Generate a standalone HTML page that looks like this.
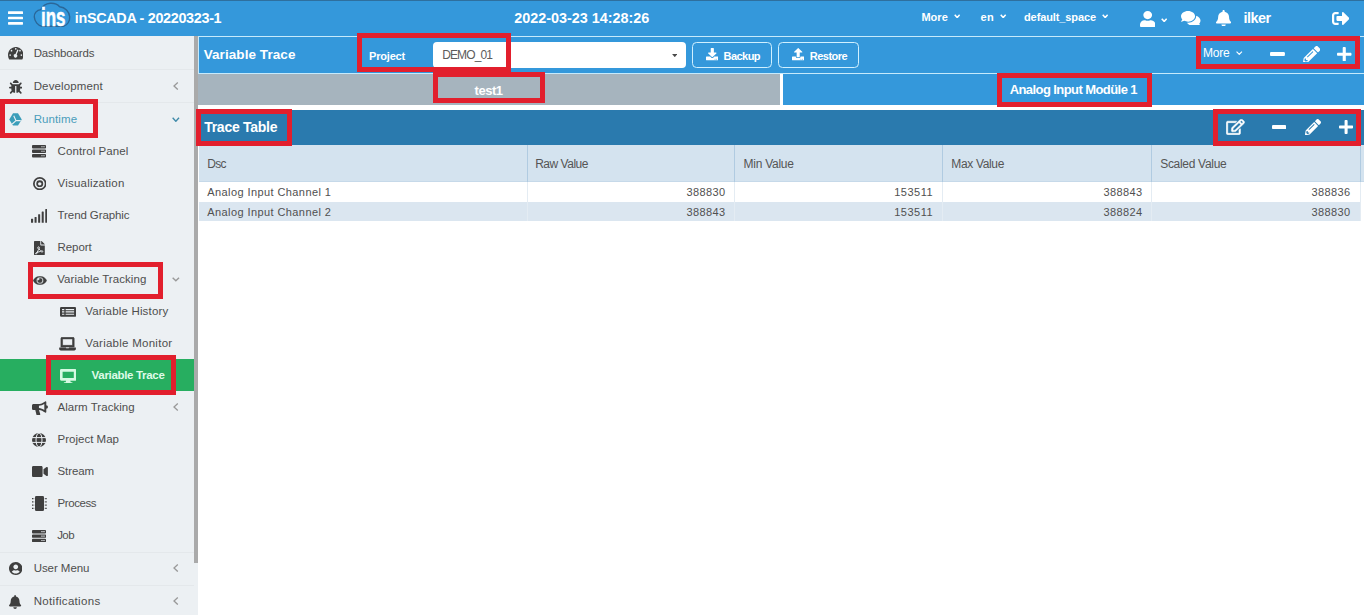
<!DOCTYPE html>
<html lang="en">
<head>
<meta charset="utf-8">
<title>inSCADA - Variable Trace</title>
<style>
*{box-sizing:border-box;margin:0;padding:0}
html,body{width:1364px;height:615px;overflow:hidden;background:#fff;font-family:"Liberation Sans",sans-serif;color:#444}
div,span,svg{position:absolute}
.t{white-space:nowrap;line-height:1}
#topbar{left:0;top:0;width:1364px;height:36px;background:#3498db;border-top:1px solid #2e6f9e}
#sidebar{left:0;top:36px;width:198px;height:579px;background:#ecf0f3}
#sbscroll{left:194px;top:36px;width:4px;height:527px;background:#aaa}
.sep{left:0;width:194px;height:1px;background:#e4e8eb}
#active{left:0;top:359px;width:194px;height:32px;background:#27ae60}
.red{border:4.5px solid #e21f2d}
#hdr{left:198px;top:36px;width:1166px;height:38px;background:#3498db;border:1px solid #c6eafc;border-right:0}
#tab1{left:198px;top:74px;width:582px;height:31px;background:#a6b4be}
#tab2{left:783px;top:74px;width:581px;height:31px;background:#3498db}
#tbar{left:199px;top:110px;width:1165px;height:35px;background:#2a7aae}
#thead{left:199px;top:145px;width:1165px;height:36.5px;background:#d4e3ef;border-bottom:1px solid #c6d9e9}
#row2{left:199px;top:201.5px;width:1160.5px;height:19.5px;background:#dbe6f0}
.vl{width:1px;background:#b0cbe1}
.btn{border:1px solid #d0f0ff;border-radius:4.5px;height:26px;top:42px}
#sel{left:433px;top:42px;width:253px;height:26px;background:#fff;border-radius:4px}
</style>
</head>
<body>

<div id="topbar"></div>
<svg style="left:8px;top:11px;color:#fff" width="15.00" height="14.00" viewBox="0 0 15 14" preserveAspectRatio="none" fill="currentColor"><rect x="0" y="0.3" width="15" height="2.7" rx="0.6"/><rect x="0" y="5.65" width="15" height="2.7" rx="0.6"/><rect x="0" y="11" width="15" height="2.7" rx="0.6"/></svg>
<svg style="left:0;top:0" width="80" height="36" viewBox="0 0 80 36"><path d="M41 9.600C36.500 10 34 13.500 34.300 17C34.600 21.500 38 25.600 42 26.300H63.500C67.500 25.300 70 21 69.700 16.800C69.300 11.300 65 7.300 59.600 6.700C57.300 4 53.500 3 50.200 3.300C46 3.700 42.600 6 41 9.600Z" fill="none" stroke="#2a6799" stroke-width="1.4"/></svg>
<span class="t" id="logo" style="left:40.600px;top:3px;font-size:25px;line-height:28px;font-weight:bold;color:#fff;transform-origin:0 0;transform:scaleX(0.680);-webkit-text-stroke:0.5px #fff">ins</span>
<span class="t" id="t_title" style="left:74.80px;top:10px;font-size:14.4px;line-height:16px;color:#fff;letter-spacing:-0.327px;font-weight:bold;">inSCADA - 20220323-1</span>
<span class="t" id="t_date" style="left:514.20px;top:10px;font-size:14.4px;line-height:16px;color:#fff;letter-spacing:-0.011px;font-weight:bold;">2022-03-23 14:28:26</span>
<span class="t" id="t_more" style="left:921.40px;top:11px;font-size:11px;line-height:12px;color:#fff;letter-spacing:0.030px;font-weight:bold;">More</span>
<svg style="left:954px;top:13.8px;color:#fff" width="6.40" height="4.50" viewBox="0 0 7 4.6" preserveAspectRatio="none" fill="currentColor"><path d="M0.8 0.8L3.5 3.6L6.2 0.8" fill="none" stroke="currentColor" stroke-width="1.7"/></svg>
<span class="t" style="left:980.60px;top:11px;font-size:11px;line-height:12px;color:#fff;letter-spacing:0.282px;font-weight:bold;">en</span>
<svg style="left:1000.3px;top:13.8px;color:#fff" width="6.40" height="4.50" viewBox="0 0 7 4.6" preserveAspectRatio="none" fill="currentColor"><path d="M0.8 0.8L3.5 3.6L6.2 0.8" fill="none" stroke="currentColor" stroke-width="1.7"/></svg>
<span class="t" style="left:1024.00px;top:11px;font-size:11px;line-height:12px;color:#fff;letter-spacing:-0.105px;font-weight:bold;">default_space</span>
<svg style="left:1102px;top:13.8px;color:#fff" width="6.40" height="4.50" viewBox="0 0 7 4.6" preserveAspectRatio="none" fill="currentColor"><path d="M0.8 0.8L3.5 3.6L6.2 0.8" fill="none" stroke="currentColor" stroke-width="1.7"/></svg>
<svg style="left:1139.8px;top:10.6px;color:#fff" width="15.40" height="16.40" viewBox="0.00 0.00 448.00 512.00" preserveAspectRatio="none" fill="currentColor"><path d="M224 256c70.7 0 128-57.3 128-128S294.7 0 224 0 96 57.3 96 128s57.3 128 128 128zm89.6 32h-16.7c-22.2 10.2-46.9 16-72.9 16s-50.6-5.800-72.900-16h-16.700C60.200 288 0 348.200 0 422.400V464c0 26.500 21.500 48 48 48h352c26.500 0 48-21.500 48-48v-41.600c0-74.200-60.200-134.400-134.400-134.400z"/></svg>
<svg style="left:1161px;top:17.8px;color:#fff" width="6.40" height="4.40" viewBox="0 0 7 4.6" preserveAspectRatio="none" fill="currentColor"><path d="M0.8 0.8L3.5 3.6L6.2 0.8" fill="none" stroke="currentColor" stroke-width="1.7"/></svg>
<svg style="left:1181px;top:10.6px;color:#fff" width="19.50" height="14.90" viewBox="0.00 32.00 576.00 448.00" preserveAspectRatio="none" fill="currentColor"><path d="M416 192c0-88.400-93.100-160-208-160S0 103.600 0 192c0 34.300 14.100 65.900 38 92-13.400 30.200-35.500 54.200-35.800 54.500-2.200 2.300-2.800 5.700-1.500 8.700S4.800 352 8 352c36.600 0 66.900-12.300 88.700-25 32.200 15.700 70.300 25 111.300 25 114.900 0 208-71.600 208-160zm122 220c23.900-26 38-57.700 38-92 0-66.900-53.500-124.200-129.300-148.100.9 6.600 1.300 13.300 1.300 20.100 0 105.900-107.700 192-240 192-10.800 0-21.300-.8-31.700-1.900C207.800 439.600 281.800 480 368 480c41 0 79.100-9.200 111.300-25 21.800 12.700 52.100 25 88.700 25 3.200 0 6.100-1.900 7.300-4.800 1.300-2.900.7-6.300-1.500-8.700-.3-.3-22.400-24.200-35.800-54.500z"/></svg>
<svg style="left:1216px;top:9.7px;color:#fff" width="15.20" height="16.60" viewBox="-0.00 0.00 448.00 512.00" preserveAspectRatio="none" fill="currentColor"><path d="M224 512c35.320 0 63.970-28.650 63.970-64H160.030c0 35.350 28.650 64 63.970 64zm215.390-149.710c-19.320-20.760-55.470-51.990-55.470-154.290 0-77.700-54.480-139.900-127.940-155.160V32c0-17.670-14.320-32-31.980-32s-31.980 14.330-31.980 32v20.840C118.560 68.100 64.080 130.300 64.080 208c0 102.300-36.150 133.530-55.470 154.290-6 6.450-8.660 14.160-8.610 21.710.11 16.400 12.980 32 32.100 32h383.800c19.120 0 32-15.600 32.100-32 .05-7.550-2.610-15.270-8.610-21.710z"/></svg>
<span class="t" style="left:1243.50px;top:10px;font-size:14.4px;line-height:16px;color:#fff;letter-spacing:-0.485px;font-weight:bold;">ilker</span>
<svg style="left:1331.5px;top:12px;color:#fff" width="17.50" height="13.00" viewBox="0.00 63.98 503.97 384.06" preserveAspectRatio="none" fill="currentColor"><path d="M497 273L329 441c-15 15-41 4.500-41-17v-96H152c-13.300 0-24-10.700-24-24v-96c0-13.300 10.700-24 24-24h136V88c0-21.400 25.900-32 41-17l168 168c9.300 9.400 9.300 24.600 0 34zM192 436v-40c0-6.600-5.400-12-12-12H96c-17.700 0-32-14.300-32-32V160c0-17.700 14.300-32 32-32h84c6.600 0 12-5.400 12-12V76c0-6.600-5.400-12-12-12H96c-53 0-96 43-96 96v192c0 53 43 96 96 96h84c6.600 0 12-5.400 12-12z"/></svg>
<div id="sidebar"></div><div id="sbscroll"></div>
<div class="sep" style="top:69px"></div>
<div class="sep" style="top:102px"></div>
<div class="sep" style="top:551.5px"></div>
<div class="sep" style="top:584.5px"></div>
<div id="active"></div>
<span class="t" style="left:33.70px;top:47px;font-size:11.5px;line-height:12px;color:#4e4e4e;letter-spacing:-0.141px;">Dashboards</span>
<span class="t" style="left:33.70px;top:80px;font-size:11.5px;line-height:12px;color:#4e4e4e;letter-spacing:0.122px;">Development</span>
<span class="t" style="left:33.70px;top:113px;font-size:11.5px;line-height:12px;color:#4a9dbb;letter-spacing:0.097px;">Runtime</span>
<span class="t" style="left:57.60px;top:145px;font-size:11.5px;line-height:12px;color:#4e4e4e;letter-spacing:0.086px;">Control Panel</span>
<span class="t" style="left:57.60px;top:177px;font-size:11.5px;line-height:12px;color:#4e4e4e;letter-spacing:0.196px;">Visualization</span>
<span class="t" style="left:57.60px;top:209px;font-size:11.5px;line-height:12px;color:#4e4e4e;letter-spacing:-0.091px;">Trend Graphic</span>
<span class="t" style="left:57.60px;top:241px;font-size:11.5px;line-height:12px;color:#4e4e4e;letter-spacing:-0.086px;">Report</span>
<span class="t" style="left:57.20px;top:273px;font-size:11.5px;line-height:12px;color:#4e4e4e;letter-spacing:0.071px;">Variable Tracking</span>
<span class="t" style="left:85.30px;top:305px;font-size:11.5px;line-height:12px;color:#4e4e4e;letter-spacing:0.174px;">Variable History</span>
<span class="t" style="left:85.30px;top:337px;font-size:11.5px;line-height:12px;color:#4e4e4e;letter-spacing:0.264px;">Variable Monitor</span>
<span class="t" style="left:91.60px;top:369px;font-size:11.5px;line-height:12px;color:#defbe7;letter-spacing:-0.319px;font-weight:bold;">Variable Trace</span>
<span class="t" style="left:57.50px;top:401px;font-size:11.5px;line-height:12px;color:#4e4e4e;letter-spacing:0.037px;">Alarm Tracking</span>
<span class="t" style="left:57.50px;top:433px;font-size:11.5px;line-height:12px;color:#4e4e4e;letter-spacing:0.013px;">Project Map</span>
<span class="t" style="left:57.50px;top:465px;font-size:11.5px;line-height:12px;color:#4e4e4e;letter-spacing:-0.094px;">Stream</span>
<span class="t" style="left:57.50px;top:497px;font-size:11.5px;line-height:12px;color:#4e4e4e;letter-spacing:-0.406px;">Process</span>
<span class="t" style="left:57.20px;top:529px;font-size:11.5px;line-height:12px;color:#4e4e4e;letter-spacing:-0.581px;">Job</span>
<span class="t" style="left:33.70px;top:562px;font-size:11.5px;line-height:12px;color:#4e4e4e;letter-spacing:-0.060px;">User Menu</span>
<span class="t" style="left:33.70px;top:595px;font-size:11.5px;line-height:12px;color:#4e4e4e;letter-spacing:0.320px;">Notifications</span>
<svg style="left:7.8px;top:47.4px;color:#3f3f3f" width="15.50" height="12.60" viewBox="0 0 576 448" preserveAspectRatio="none" fill="currentColor"><path d="M288 0C128.940 0 0 128.940 0 288c0 52.800 14.250 102.260 39.060 144.800 5.610 9.620 16.300 15.200 27.440 15.200h443c11.140 0 21.830-5.580 27.440-15.200C561.750 390.260 576 340.800 576 288 576 128.940 447.060 0 288 0z"/><g fill="#ecf0f3"><circle cx="288" cy="64" r="30"/><circle cx="130" cy="130" r="30"/><circle cx="446" cy="130" r="30"/><circle cx="80" cy="288" r="30"/><circle cx="496" cy="288" r="30"/><path d="M392 110l-70 160a64 64 0 1 1-44-18l70-160z"/></g></svg>
<svg style="left:8.5px;top:80px;color:#3f3f3f" width="13.50" height="13.70" viewBox="0.00 0.00 512.00 512.00" preserveAspectRatio="none" fill="currentColor"><path d="M511.988 288.900c-.478 17.430-15.217 31.100-32.653 31.100H424v16c0 21.864-4.882 42.584-13.600 61.145l60.228 60.228c12.496 12.497 12.496 32.758 0 45.255-12.498 12.497-32.759 12.496-45.256 0l-54.736-54.736C345.886 467.965 314.351 480 280 480V236c0-6.627-5.373-12-12-12h-24c-6.627 0-12 5.373-12 12v244c-34.351 0-65.886-12.035-90.636-32.108l-54.736 54.736c-12.498 12.497-32.759 12.496-45.256 0-12.496-12.497-12.496-32.758 0-45.255l60.228-60.228C92.882 378.584 88 357.864 88 336v-16H32.666C15.230 320 .491 306.330.013 288.900-.484 270.816 14.028 256 32 256h56v-58.745l-46.628-46.628c-12.496-12.497-12.496-32.758 0-45.255 12.498-12.497 32.758-12.497 45.256 0L141.255 160h229.489l54.627-54.627c12.498-12.497 32.758-12.497 45.256 0 12.496 12.497 12.496 32.758 0 45.255L424 197.255V256h56c17.972 0 32.484 14.816 31.988 32.900zM257 0c-61.856 0-112 50.144-112 112h224C369 50.144 318.856 0 257 0z"/></svg>
<svg style="left:9px;top:113px;color:#3a9db9" width="13.00" height="12.80" viewBox="0 0 26 25" preserveAspectRatio="none" fill="currentColor"><path d="M8 0.500h10l7.500 12-7.500 12H8L0.500 12.500z"/><path d="M9.500 5.500l4.500 9.500M14 15h9.500M14 15l-7.500 6.500" fill="none" stroke="#ecf0f3" stroke-width="2.200"/></svg>
<svg style="left:32.3px;top:145.4px;color:#3f3f3f" width="14.10" height="12.50" viewBox="0 0 14 12.2" preserveAspectRatio="none" fill="currentColor"><path fill-rule="evenodd" d="M0.9 0h12.2a.9.9 0 0 1 .9.9v1.6a.9.9 0 0 1-.9.9H.9a.9.9 0 0 1-.9-.9V.9A.9.9 0 0 1 .9 0zM0.9 4.4h12.2a.9.9 0 0 1 .9.9v1.6a.9.9 0 0 1-.9.9H.9a.9.9 0 0 1-.9-.9V5.300a.9.9 0 0 1 .9-.9zM0.9 8.800h12.200a.9.9 0 0 1 .9.9v1.600a.9.9 0 0 1-.9.900H.9a.9.9 0 0 1-.9-.9V9.700a.9.9 0 0 1 .9-.9zM9.300 1.100v1.200h1.200V1.100zM11.300 1.100v1.200h1.200V1.100zM9.300 5.500v1.200h1.200V5.500zM11.300 5.500v1.200h1.200V5.500zM9.300 9.900v1.200h1.200V9.900zM11.300 9.900v1.200h1.200V9.900z"/></svg>
<svg style="left:32.7px;top:177.2px;color:#3f3f3f" width="13.50" height="13.30" viewBox="0 0 496 496" preserveAspectRatio="none" fill="currentColor"><path fill-rule="evenodd" d="M248 0a248 248 0 1 0 0 496a248 248 0 1 0 0-496zM248 64a184 184 0 1 1 0 368a184 184 0 1 1 0-368zM248 120a128 128 0 1 0 0 256a128 128 0 1 0 0-256zM248 192a64 64 0 1 1 0 128a64 64 0 1 1 0-128z"/></svg>
<svg style="left:31.2px;top:208.8px;color:#3f3f3f" width="16.30" height="13.80" viewBox="0 0 16 14" preserveAspectRatio="none" fill="currentColor"><rect x="0" y="9.800" width="2.100" height="4.200" rx=".4"/><rect x="3.500" y="8" width="2" height="6" rx=".4"/><rect x="7" y="5.300" width="2" height="8.700" rx=".4"/><rect x="10.500" y="2.600" width="2" height="11.400" rx=".4"/><rect x="14" y="0" width="2" height="14" rx=".4"/></svg>
<svg style="left:33.9px;top:240.5px;color:#3f3f3f" width="10.80" height="14.10" viewBox="0 0 384 512" preserveAspectRatio="none" fill="currentColor"><path d="M224 136V0H24C10.700 0 0 10.700 0 24v464c0 13.300 10.700 24 24 24h336c13.300 0 24-10.700 24-24V160H248c-13.200 0-24-10.800-24-24zM384 121.900v6.100H256V0h6.100c6.400 0 12.500 2.500 17 7l97.900 98c4.500 4.500 7 10.600 7 16.900z"/><path d="M150 215c-14 0-20 16-12 42c5 18 12 36 22 54c-12 32-30 68-52 100c-22 10-48 24-52 44c-3 16 18 28 38 6c14-14 28-34 42-58c30-12 64-20 96-24c22 14 48 22 66 20c22-3 26-30 2-38c-16-5-38-5-62-2c-24-18-44-44-56-72c8-28 12-52 6-62c-8-14-22-14-38-10z" fill="none" stroke="#ecf0f3" stroke-width="34" stroke-linejoin="round"/></svg>
<svg style="left:33.2px;top:275.5px;color:#3f3f3f" width="13.90" height="9.00" viewBox="-6 58 588 396" preserveAspectRatio="none" fill="currentColor"><path stroke="currentColor" stroke-width="12" stroke-linejoin="round" d="M572.520 241.400C518.290 135.590 410.930 64 288 64S57.680 135.640 3.480 241.410a32.350 32.350 0 0 0 0 29.190C57.710 376.410 165.070 448 288 448s230.320-71.640 284.520-177.410a32.350 32.350 0 0 0 0-29.190zM288 400a144 144 0 1 1 144-144 143.930 143.930 0 0 1-144 144zm0-240a95.310 95.310 0 0 0-25.310 3.790 47.850 47.850 0 0 1-66.900 66.900A95.780 95.780 0 1 0 288 160z"/></svg>
<svg style="left:59.5px;top:307px;color:#3f3f3f" width="16.10" height="9.80" viewBox="0 0 16 10" preserveAspectRatio="none" fill="currentColor"><path fill-rule="evenodd" d="M1.200 0h13.600a1.200 1.200 0 0 1 1.200 1.200v7.600a1.200 1.200 0 0 1-1.200 1.200H1.200A1.200 1.200 0 0 1 0 8.800V1.200A1.200 1.200 0 0 1 1.200 0zM2 2.100v1.100h2.300V2.100zM5.600 2.100v1.100h8.400V2.100zM2 4.450v1.100h2.300v-1.100zM5.600 4.450v1.100h8.400v-1.100zM2 6.800v1.100h2.300V6.800zM5.600 6.800v1.100h8.400V6.800z"/></svg>
<svg style="left:58.8px;top:337px;color:#3f3f3f" width="17.10" height="13.50" viewBox="-10 -10 660 532" preserveAspectRatio="none" fill="currentColor"><path stroke="currentColor" stroke-width="22" stroke-linejoin="round" d="M624 416H381.540c-.74 19.810-14.710 32-32.740 32H288c-18.690 0-33.020-17.470-32.770-32H16c-8.800 0-16 7.200-16 16v16c0 35.200 28.800 64 64 64h512c35.200 0 64-28.800 64-64v-16c0-8.800-7.200-16-16-16zM576 48c0-26.400-21.600-48-48-48H112C85.600 0 64 21.600 64 48v336h512V48zm-64 272H128V64h384v256z"/></svg>
<svg style="left:59.5px;top:368.6px;color:#d6f9e2" width="16.40" height="14.60" viewBox="0 0 16.4 14.4" preserveAspectRatio="none" fill="currentColor"><path fill-rule="evenodd" d="M1.300 0h13.800a1.300 1.300 0 0 1 1.300 1.300v8.900a1.300 1.300 0 0 1-1.300 1.300H10.300l.5 1.500h1.100a.7.700 0 0 1 0 1.400H4.500a.7.700 0 0 1 0-1.400h1.100l.5-1.500H1.300A1.300 1.300 0 0 1 0 10.200V1.300A1.300 1.300 0 0 1 1.300 0zM2.600 2.600v6.200h11.200V2.600z"/></svg>
<svg style="left:31.7px;top:400.6px;color:#3f3f3f" width="15.90" height="14.40" viewBox="0 0 16 14.4" preserveAspectRatio="none" fill="currentColor"><path d="M13.200 0.400c.5-.4 1.200-.1 1.200.6v3.300a1.700 1.700 0 0 1 0 3.400v3.300c0 .7-.7 1-1.200.6C11.300 10 9.200 9.100 7 8.900v.1l1.300 4c.2.700-.3 1.400-1 1.400H5.500c-.5 0-.9-.3-1-.7L3.300 9H1.600C.7 9 0 8.300 0 7.400V4.600C0 3.700.7 3 1.600 3H6c2.600 0 5.100-1 7.200-2.600zM12.400 3C10.800 4 9 4.600 7 4.800v2.300c2 .2 3.800.9 5.400 1.900z" fill-rule="evenodd"/></svg>
<svg style="left:32px;top:432.7px;color:#3f3f3f" width="14.00" height="14.00" viewBox="0 0 14 14" preserveAspectRatio="none" fill="currentColor"><circle cx="7" cy="7" r="7"/><g fill="none" stroke="#ecf0f3" stroke-width="1"><ellipse cx="7" cy="7" rx="3" ry="7"/><path d="M0 4.600h14M0 9.400h14"/></g></svg>
<svg style="left:31.7px;top:466px;color:#3f3f3f" width="15.90" height="11.00" viewBox="0 0 576 384" preserveAspectRatio="none" fill="currentColor"><path d="M336.200 0H47.800C21.400 0 0 21.400 0 47.800v288.400C0 362.600 21.400 384 47.800 384h288.400c26.400 0 47.800-21.400 47.800-47.800V47.800C384 21.400 362.600 0 336.200 0zM525.600 37.700L416 113.300v157.400l109.600 75.500c21.200 14.600 50.400-.3 50.400-25.800V63.500c0-25.400-29.100-40.400-50.400-25.800z"/></svg>
<svg style="left:32px;top:496px;color:#3f3f3f" width="15.00" height="15.00" viewBox="0 0 15 15" preserveAspectRatio="none" fill="currentColor"><rect x="3" y="0" width="9" height="15" rx="1.300"/><path d="M0 2.600h2.200M0 5.900h2.200M0 9.100h2.200M0 12.400h2.200M12.800 2.600H15M12.800 5.900H15M12.800 9.100H15M12.800 12.400H15" fill="none" stroke="currentColor" stroke-width="1.100" stroke-dasharray="1 .5"/></svg>
<svg style="left:32.2px;top:529.6px;color:#3f3f3f" width="14.10" height="12.20" viewBox="0 0 14 12.2" preserveAspectRatio="none" fill="currentColor"><path fill-rule="evenodd" d="M0.9 0h12.2a.9.9 0 0 1 .9.9v1.6a.9.9 0 0 1-.9.9H.9a.9.9 0 0 1-.9-.9V.9A.9.9 0 0 1 .9 0zM0.9 4.4h12.2a.9.9 0 0 1 .9.9v1.6a.9.9 0 0 1-.9.9H.9a.9.9 0 0 1-.9-.9V5.300a.9.9 0 0 1 .9-.9zM0.9 8.800h12.200a.9.9 0 0 1 .9.9v1.600a.9.9 0 0 1-.9.900H.9a.9.9 0 0 1-.9-.9V9.700a.9.9 0 0 1 .9-.9zM9.300 1.100v1.200h1.200V1.100zM11.300 1.100v1.200h1.200V1.100zM9.300 5.500v1.200h1.200V5.500zM11.300 5.500v1.200h1.200V5.500zM9.300 9.900v1.200h1.200V9.900zM11.300 9.900v1.200h1.200V9.900z"/></svg>
<svg style="left:8.5px;top:562px;color:#3f3f3f" width="13.50" height="13.00" viewBox="0 0 496 496" preserveAspectRatio="none" fill="currentColor"><path d="M248 0C111 0 0 111 0 248s111 248 248 248 248-111 248-248S385 0 248 0zm0 96c48.600 0 88 39.400 88 88s-39.400 88-88 88-88-39.400-88-88 39.400-88 88-88zm0 344c-58.700 0-111.300-26.600-146.500-68.200 18.800-35.400 55.600-59.800 98.500-59.800 2.400 0 4.800.4 7.100 1.100 13 4.200 26.600 6.900 40.900 6.900 14.300 0 28-2.700 40.900-6.900 2.300-.7 4.700-1.100 7.100-1.100 42.900 0 79.700 24.400 98.500 59.800C359.300 413.400 306.700 440 248 440z"/></svg>
<svg style="left:9.4px;top:595px;color:#3f3f3f" width="12.20" height="14.00" viewBox="-0.00 0.00 448.00 512.00" preserveAspectRatio="none" fill="currentColor"><path d="M224 512c35.320 0 63.970-28.650 63.970-64H160.030c0 35.350 28.650 64 63.970 64zm215.390-149.710c-19.320-20.760-55.470-51.990-55.470-154.290 0-77.700-54.480-139.900-127.940-155.160V32c0-17.670-14.320-32-31.980-32s-31.980 14.330-31.980 32v20.840C118.560 68.100 64.080 130.300 64.080 208c0 102.300-36.150 133.530-55.470 154.290-6 6.450-8.660 14.160-8.610 21.710.11 16.400 12.980 32 32.100 32h383.800c19.120 0 32-15.600 32.100-32 .05-7.550-2.610-15.270-8.610-21.710z"/></svg>
<svg style="left:173.3px;top:82.3px;color:#999" width="5.50" height="8.20" viewBox="0 0 5.5 8.2" preserveAspectRatio="none" fill="currentColor"><path d="M4.8 0.6L1 4.1L4.8 7.6" fill="none" stroke="currentColor" stroke-width="1.3"/></svg>
<svg style="left:172px;top:116.8px;color:#3f8aa9" width="7.70" height="5.10" viewBox="0 0 7 4.2" preserveAspectRatio="none" fill="currentColor"><path d="M0.6 0.6L3.5 3.5L6.4 0.6" fill="none" stroke="currentColor" stroke-width="1.25"/></svg>
<svg style="left:171.9px;top:277.2px;color:#999" width="7.70" height="4.60" viewBox="0 0 7 4.2" preserveAspectRatio="none" fill="currentColor"><path d="M0.6 0.6L3.5 3.5L6.4 0.6" fill="none" stroke="currentColor" stroke-width="1.25"/></svg>
<svg style="left:173.3px;top:403px;color:#999" width="5.50" height="8.00" viewBox="0 0 5.5 8.2" preserveAspectRatio="none" fill="currentColor"><path d="M4.8 0.6L1 4.1L4.8 7.6" fill="none" stroke="currentColor" stroke-width="1.3"/></svg>
<svg style="left:173.3px;top:564.2px;color:#999" width="5.50" height="8.20" viewBox="0 0 5.5 8.2" preserveAspectRatio="none" fill="currentColor"><path d="M4.8 0.6L1 4.1L4.8 7.6" fill="none" stroke="currentColor" stroke-width="1.3"/></svg>
<svg style="left:173.3px;top:597.2px;color:#999" width="5.50" height="8.20" viewBox="0 0 5.5 8.2" preserveAspectRatio="none" fill="currentColor"><path d="M4.8 0.6L1 4.1L4.8 7.6" fill="none" stroke="currentColor" stroke-width="1.3"/></svg>
<div id="hdr"></div>
<span class="t" style="left:203.70px;top:47px;font-size:13.5px;line-height:15px;color:#fff;letter-spacing:0.070px;font-weight:bold;">Variable Trace</span>
<span class="t" style="left:369.00px;top:50px;font-size:11px;line-height:12px;color:#fff;letter-spacing:-0.185px;font-weight:bold;">Project</span>
<div id="sel"></div>
<span class="t" style="left:442.20px;top:48px;font-size:12px;line-height:14px;color:#5c5c5c;letter-spacing:-0.889px;">DEMO_01</span>
<svg style="left:671.7px;top:54px" width="5.6" height="3.2" viewBox="0 0 6 3.5"><path d="M0 0H6L3 3.5Z" fill="#4a4a4a"/></svg>
<div class="btn" style="left:692px;width:80px"></div>
<svg style="left:705.6px;top:48.4px;color:#fff" width="12.60" height="12.30" viewBox="0 0 512 512" preserveAspectRatio="none" fill="currentColor"><path d="M216 0h80c13.300 0 24 10.700 24 24v168h87.700c17.800 0 26.700 21.500 14.100 34.100L269.700 378.300c-7.500 7.500-19.800 7.500-27.300 0L90.100 226.100c-12.600-12.600-3.700-34.100 14.100-34.100H192V24c0-13.300 10.700-24 24-24zm296 376v112c0 13.300-10.700 24-24 24H24c-13.300 0-24-10.700-24-24V376c0-13.300 10.700-24 24-24h146.700l49 49c20.100 20.100 52.500 20.100 72.600 0l49-49H488c13.300 0 24 10.700 24 24zm-124 88c0-11-9-20-20-20s-20 9-20 20 9 20 20 20 20-9 20-20zm64 0c0-11-9-20-20-20s-20 9-20 20 9 20 20 20 20-9 20-20z"/></svg>
<span class="t" style="left:723.60px;top:50px;font-size:11px;line-height:12px;color:#fff;letter-spacing:-0.556px;font-weight:bold;">Backup</span>
<div class="btn" style="left:778px;width:81px"></div>
<svg style="left:792px;top:48.4px;color:#fff" width="12.40" height="12.30" viewBox="0 0 512 512" preserveAspectRatio="none" fill="currentColor"><path d="M296 384h-80c-13.300 0-24-10.700-24-24V192h-87.700c-17.800 0-26.700-21.500-14.100-34.100L242.300 5.700c7.500-7.500 19.800-7.500 27.300 0l152.200 152.200c12.600 12.600 3.700 34.100-14.100 34.100H320v168c0 13.300-10.700 24-24 24zm216-8v112c0 13.300-10.700 24-24 24H24c-13.300 0-24-10.700-24-24V376c0-13.300 10.700-24 24-24h136v8c0 30.900 25.100 56 56 56h80c30.900 0 56-25.100 56-56v-8h136c13.300 0 24 10.700 24 24zm-124 88c0-11-9-20-20-20s-20 9-20 20 9 20 20 20 20-9 20-20zm64 0c0-11-9-20-20-20s-20 9-20 20 9 20 20 20 20-9 20-20z"/></svg>
<span class="t" style="left:809.70px;top:50px;font-size:11px;line-height:12px;color:#fff;letter-spacing:-0.494px;font-weight:bold;">Restore</span>
<span class="t" style="left:1203.00px;top:46px;font-size:12px;line-height:14px;color:#fff;letter-spacing:-0.185px;">More</span>
<svg style="left:1236px;top:51px;color:#fff" width="6.50" height="4.00" viewBox="0 0 7 4.2" preserveAspectRatio="none" fill="currentColor"><path d="M0.6 0.6L3.5 3.5L6.4 0.6" fill="none" stroke="currentColor" stroke-width="1.25"/></svg>
<svg style="left:1270.3px;top:52px;color:#fff" width="14.90" height="4.00" viewBox="0.00 208.00 448.00 96.00" preserveAspectRatio="none" fill="currentColor"><path d="M416 208H32c-17.670 0-32 14.330-32 32v32c0 17.670 14.330 32 32 32h384c17.670 0 32-14.330 32-32v-32c0-17.670-14.330-32-32-32z"/></svg>
<svg style="left:1302.7px;top:45.5px;color:#fff" width="17.30" height="16.90" viewBox="0.02 0.08 511.98 511.98" preserveAspectRatio="none" fill="currentColor"><path d="M497.9 142.100l-46.100 46.100c-4.700 4.700-12.300 4.700-17 0l-111-111c-4.700-4.700-4.700-12.300 0-17l46.100-46.100c18.700-18.700 49.100-18.700 67.900 0l60.100 60.100c18.800 18.700 18.800 49.100 0 67.900zM284.200 99.800L21.600 362.400.4 483.900c-2.900 16.400 11.400 30.600 27.800 27.800l121.500-21.300 262.600-262.600c4.700-4.700 4.700-12.300 0-17l-111-111c-4.800-4.700-12.400-4.700-17.100 0zM124.100 339.900c-5.500-5.500-5.500-14.300 0-19.800l154-154c5.500-5.500 14.300-5.500 19.800 0s5.500 14.300 0 19.800l-154 154c-5.500 5.500-14.300 5.500-19.800 0zM88 424h48v36.300l-64.500 11.300-31.100-31.100L51.700 376H88v48z"/></svg>
<svg style="left:1337.3px;top:46.5px;color:#fff" width="14.50" height="14.50" viewBox="0.00 32.00 448.00 448.00" preserveAspectRatio="none" fill="currentColor"><path d="M416 208H272V64c0-17.670-14.330-32-32-32h-32c-17.670 0-32 14.330-32 32v144H32c-17.670 0-32 14.330-32 32v32c0 17.670 14.330 32 32 32h144v144c0 17.670 14.330 32 32 32h32c17.670 0 32-14.330 32-32V304h144c17.670 0 32-14.330 32-32v-32c0-17.670-14.330-32-32-32z"/></svg>
<div id="tab1"></div><div id="tab2"></div>
<span class="t" style="left:474.60px;top:83px;font-size:13px;line-height:15px;color:#fff;letter-spacing:-0.490px;font-weight:bold;">test1</span>
<span class="t" style="left:1009.70px;top:82px;font-size:13px;line-height:15px;color:#fff;letter-spacing:-0.575px;font-weight:bold;">Analog Input Modüle 1</span>
<div id="tbar"></div>
<span class="t" style="left:204.20px;top:119px;font-size:14px;line-height:16px;color:#fff;letter-spacing:-0.273px;font-weight:bold;">Trace Table</span>
<svg style="left:1226.2px;top:118.8px;color:#fff" width="18.80" height="16.00" viewBox="-8 -8 592 528" preserveAspectRatio="none" fill="currentColor"><path stroke="currentColor" stroke-width="16" d="M402.300 344.900l32-32c5-5 13.700-1.500 13.700 5.700V464c0 26.500-21.500 48-48 48H48c-26.500 0-48-21.500-48-48V112c0-26.500 21.500-48 48-48h273.500c7.100 0 10.700 8.600 5.700 13.700l-32 32c-1.500 1.500-3.500 2.300-5.700 2.300H48v352h352V350.500c0-2.100.8-4.100 2.300-5.600zm156.600-201.800L296.300 405.700l-90.400 10c-26.200 2.900-48.500-19.200-45.600-45.600l10-90.400L432.900 17.100c22.900-22.900 59.900-22.900 82.700 0l43.200 43.200c22.900 22.900 22.900 60 .1 82.800zM460.100 174L402 115.900 216.200 301.800l-7.300 65.300 65.300-7.300L460.100 174zm64.800-79.700l-43.200-43.200c-4.100-4.100-10.800-4.100-14.800 0L436 82l58.100 58.100 30.900-30.900c4-4.200 4-10.800-.100-14.900z"/></svg>
<svg style="left:1272px;top:124.7px;color:#fff" width="14.20" height="4.30" viewBox="0.00 208.00 448.00 96.00" preserveAspectRatio="none" fill="currentColor"><path d="M416 208H32c-17.670 0-32 14.330-32 32v32c0 17.670 14.330 32 32 32h384c17.670 0 32-14.330 32-32v-32c0-17.670-14.330-32-32-32z"/></svg>
<svg style="left:1305px;top:118.5px;color:#fff" width="16.00" height="16.20" viewBox="0.02 0.08 511.98 511.98" preserveAspectRatio="none" fill="currentColor"><path d="M497.9 142.100l-46.100 46.100c-4.700 4.700-12.300 4.700-17 0l-111-111c-4.700-4.700-4.700-12.300 0-17l46.100-46.100c18.700-18.700 49.100-18.700 67.900 0l60.100 60.100c18.800 18.700 18.800 49.100 0 67.900zM284.200 99.800L21.600 362.400.4 483.900c-2.900 16.400 11.400 30.600 27.800 27.800l121.500-21.300 262.600-262.600c4.700-4.700 4.700-12.300 0-17l-111-111c-4.800-4.700-12.400-4.700-17.100 0zM124.100 339.900c-5.500-5.500-5.500-14.300 0-19.800l154-154c5.500-5.500 14.300-5.500 19.800 0s5.500 14.300 0 19.800l-154 154c-5.500 5.500-14.300 5.500-19.800 0zM88 424h48v36.300l-64.500 11.300-31.100-31.100L51.700 376H88v48z"/></svg>
<svg style="left:1339.3px;top:120px;color:#fff" width="14.20" height="14.00" viewBox="0.00 32.00 448.00 448.00" preserveAspectRatio="none" fill="currentColor"><path d="M416 208H272V64c0-17.670-14.330-32-32-32h-32c-17.670 0-32 14.330-32 32v144H32c-17.670 0-32 14.330-32 32v32c0 17.670 14.330 32 32 32h144v144c0 17.670 14.330 32 32 32h32c17.670 0 32-14.330 32-32V304h144c17.670 0 32-14.330 32-32v-32c0-17.670-14.330-32-32-32z"/></svg>
<div id="thead"></div><div id="row2"></div>
<div class="vl" style="left:526.5px;top:145px;height:36.5px"></div><div class="vl" style="left:526.5px;top:181.5px;height:39.5px;background:#e4ecf3"></div>
<div class="vl" style="left:734px;top:145px;height:36.5px"></div><div class="vl" style="left:734px;top:181.5px;height:39.5px;background:#e4ecf3"></div>
<div class="vl" style="left:942px;top:145px;height:36.5px"></div><div class="vl" style="left:942px;top:181.5px;height:39.5px;background:#e4ecf3"></div>
<div class="vl" style="left:1151px;top:145px;height:36.5px"></div><div class="vl" style="left:1151px;top:181.5px;height:39.5px;background:#e4ecf3"></div>
<div class="vl" style="left:1359.5px;top:145px;height:36.5px"></div><div class="vl" style="left:1359.5px;top:181.5px;height:39.5px;background:#e4ecf3"></div>
<span class="t" style="left:207.30px;top:157px;font-size:12px;line-height:14px;color:#555;letter-spacing:-0.722px;">Dsc</span>
<span class="t" style="left:535.20px;top:157px;font-size:12px;line-height:14px;color:#555;letter-spacing:-0.482px;">Raw Value</span>
<span class="t" style="left:743.60px;top:157px;font-size:12px;line-height:14px;color:#555;letter-spacing:-0.275px;">Min Value</span>
<span class="t" style="left:951.30px;top:157px;font-size:12px;line-height:14px;color:#555;letter-spacing:-0.345px;">Max Value</span>
<span class="t" style="left:1160.20px;top:157px;font-size:12px;line-height:14px;color:#555;letter-spacing:-0.302px;">Scaled Value</span>
<span class="t" style="left:207.30px;top:186px;font-size:11px;line-height:12px;color:#505050;letter-spacing:0.410px;">Analog Input Channel 1</span>
<span class="t" style="left:207.30px;top:206px;font-size:11px;line-height:12px;color:#505050;letter-spacing:0.410px;">Analog Input Channel 2</span>
<span class="t" style="left:686.50px;top:186px;font-size:11px;line-height:12px;color:#505050;letter-spacing:0.382px;">388830</span>
<span class="t" style="left:894.20px;top:186px;font-size:11px;line-height:12px;color:#505050;letter-spacing:0.518px;">153511</span>
<span class="t" style="left:1103.50px;top:186px;font-size:11px;line-height:12px;color:#505050;letter-spacing:0.382px;">388843</span>
<span class="t" style="left:1311.50px;top:186px;font-size:11px;line-height:12px;color:#505050;letter-spacing:0.382px;">388836</span>
<span class="t" style="left:686.50px;top:206px;font-size:11px;line-height:12px;color:#505050;letter-spacing:0.382px;">388843</span>
<span class="t" style="left:894.20px;top:206px;font-size:11px;line-height:12px;color:#505050;letter-spacing:0.518px;">153511</span>
<span class="t" style="left:1103.50px;top:206px;font-size:11px;line-height:12px;color:#505050;letter-spacing:0.382px;">388824</span>
<span class="t" style="left:1311.50px;top:206px;font-size:11px;line-height:12px;color:#505050;letter-spacing:0.382px;">388830</span>
<div class="red" style="left:0px;top:99px;width:97.5px;height:38.5px;border-width:5px"></div>
<div class="red" style="left:28px;top:262px;width:134.7px;height:37px;border-width:5px"></div>
<div class="red" style="left:46px;top:355px;width:130px;height:40px;border-width:5px"></div>
<div class="red" style="left:357px;top:33px;width:153.5px;height:38.8px;border-width:5px"></div>
<div class="red" style="left:433.3px;top:72px;width:111.49999999999994px;height:30.799999999999997px;border-width:5px"></div>
<div class="red" style="left:997.2px;top:73px;width:154.79999999999995px;height:33.8px;border-width:5px"></div>
<div class="red" style="left:1196px;top:36px;width:163.5px;height:33.400000000000006px;border-width:5px"></div>
<div class="red" style="left:196px;top:109px;width:95.69999999999999px;height:36.80000000000001px;border-width:5px"></div>
<div class="red" style="left:1213px;top:109.3px;width:148px;height:36.7px;border-width:5px"></div>
</body>
</html>
